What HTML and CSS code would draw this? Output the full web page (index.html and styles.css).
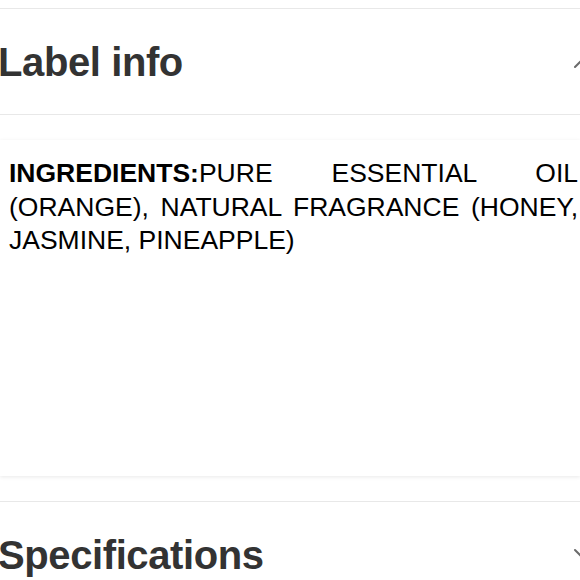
FILE: index.html
```html
<!DOCTYPE html>
<html>
<head>
<meta charset="utf-8">
<link rel="stylesheet" href="styles.css">
</head>
<body>
<div class="page">
  <section class="section">
    <div class="section-head">
      <h2 class="section-title">Label info</h2>
      <svg class="chevron" width="24" height="14" viewBox="0 0 24 14"><path d="M2 12 L12 2 L22 12" fill="none" stroke="#6b6b6b" stroke-width="2" stroke-linecap="round" stroke-linejoin="round"/></svg>
    </div>
  </section>
  <div class="card">
    <p class="ingredients"><b>INGREDIENTS:</b>PURE ESSENTIAL OIL (ORANGE), NATURAL FRAGRANCE (HONEY, JASMINE, PINEAPPLE)</p>
  </div>
  <section class="section">
    <div class="section-head">
      <h2 class="section-title">Specifications</h2>
      <svg class="chevron" width="24" height="14" viewBox="0 0 24 14"><path d="M2 2 L12 12 L22 2" fill="none" stroke="#6b6b6b" stroke-width="2" stroke-linecap="round" stroke-linejoin="round"/></svg>
    </div>
  </section>
</div>
</body>
</html>
```
FILE: styles.css
```css
html, body {
  margin: 0;
  padding: 0;
  background: #ffffff;
  overflow: hidden;
}
body {
  width: 580px;
  height: 580px;
  font-family: "Liberation Sans", Arial, sans-serif;
}
.page {
  padding-top: 8px;
  display: flex;
  flex-direction: column;
  gap: 25px;
}
.section {
  border-top: 1px solid #e8e8e8;
  border-bottom: 1px solid #e8e8e8;
}
.section-head {
  height: 105px;
  display: flex;
  align-items: center;
  justify-content: space-between;
  margin: 0 -17px 0 -2px;
}
.section-title {
  margin: 0;
  font-size: 40px;
  line-height: 1;
  font-weight: bold;
  color: #333333;
  letter-spacing: -0.4px;
}
.chevron {
  display: block;
}
.card {
  height: 336px;
  box-sizing: border-box;
  padding: 17px 2px 0 9px;
  background: #ffffff;
  box-shadow: 0 1px 4px rgba(0, 0, 0, 0.09);
}
.ingredients {
  margin: 0;
  font-size: 26.5px;
  line-height: 33.6px;
  color: #000000;
  text-align: justify;
}
.ingredients b {
  font-weight: bold;
}
```
